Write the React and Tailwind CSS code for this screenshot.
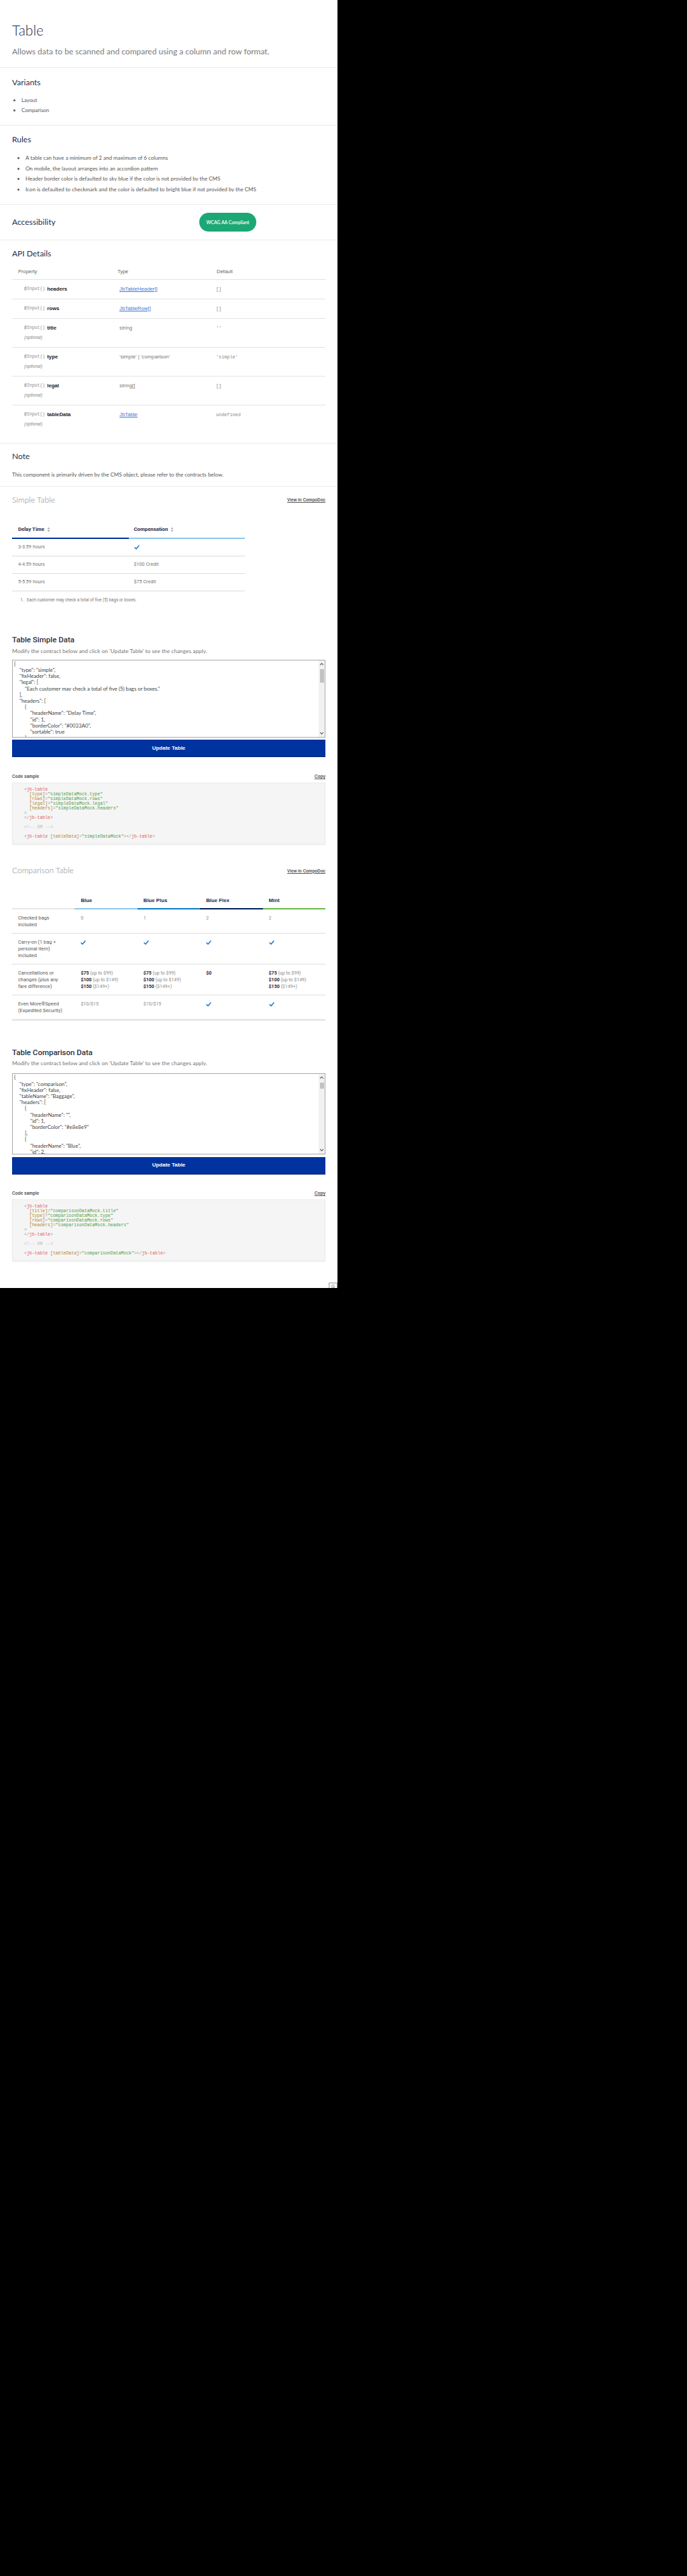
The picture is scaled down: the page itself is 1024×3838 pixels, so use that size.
import React from 'react'

const Check = () => (
  <svg width="8" height="7" viewBox="0 0 8 7" fill="none">
    <path d="M1 3.8 L3 5.8 L7 1" stroke="#1b75d0" strokeWidth="1.5" strokeLinecap="round" strokeLinejoin="round" />
  </svg>
)

const SortIcon = () => (
  <svg width="5" height="8" viewBox="0 0 5 8">
    <path d="M2.5 0.5 L4.5 3.2 H0.5Z M2.5 7.5 L4.5 4.8 H0.5Z" fill="#a8a8a8" />
  </svg>
)

const Chevron = ({ up }) => (
  <svg width="7" height="5" viewBox="0 0 7 5" fill="none">
    <path d={up ? 'M1 4 L3.5 1.3 L6 4' : 'M1 1 L3.5 3.7 L6 1'} stroke="#555" strokeWidth="1.1" />
  </svg>
)

const indent = ['pl-0', 'pl-[8px]', 'pl-[16px]', 'pl-[24px]']

const simpleJson = [
  [0, '{'],
  [1, '"type": "simple",'],
  [1, '"fixHeader": false,'],
  [1, '"legal": ['],
  [2, '"Each customer may check a total of five (5) bags or boxes."'],
  [1, '],'],
  [1, '"headers": ['],
  [2, '{'],
  [3, '"headerName": "Delay Time",'],
  [3, '"id": 1,'],
  [3, '"borderColor": "#0033A0",'],
  [3, '"sortable": true'],
  [2, '},'],
]

const comparisonJson = [
  [0, '{'],
  [1, '"type": "comparison",'],
  [1, '"fixHeader": false,'],
  [1, '"tableName": "Baggage",'],
  [1, '"headers": ['],
  [2, '{'],
  [3, '"headerName": "",'],
  [3, '"id": 1,'],
  [3, '"borderColor": "#e8e8e9"'],
  [2, '},'],
  [2, '{'],
  [3, '"headerName": "Blue",'],
  [3, '"id": 2,'],
]

const apiRows = [
  { name: 'headers', type: 'JbTableHeader[]', link: true, def: '[]' },
  { name: 'rows', type: 'JbTableRow[]', link: true, def: '[]' },
  { name: 'title', type: 'string', def: "''", optional: true },
  { name: 'type', type: "'simple' | 'comparison'", def: "'simple'", optional: true },
  { name: 'legal', type: 'string[]', def: '[]', optional: true },
  { name: 'tableData', type: 'JbTable', link: true, def: 'undefined', optional: true },
]

const Heading = ({ children }) => (
  <h2 className="text-[12px] leading-[16px] text-[#1f2d4f] font-normal">{children}</h2>
)

const Contract = ({ lines, height, thumbH }) => (
  <div>
    <div className={`flex border border-[#a9a9a9] bg-white ${height}`}>
      <div className="flex-1 overflow-hidden pl-[2px] pt-[1px] text-[7.8px] leading-[9.2px] text-[#444] font-['Lato',sans-serif]">
        {lines.map(([lvl, text], i) => (
          <div key={i} className={`whitespace-pre ${indent[lvl]}`}>{text}</div>
        ))}
      </div>
      <div className="w-[9px] bg-[#f1f1f1] flex flex-col items-center justify-between py-[3px]">
        <div className="flex flex-col items-center gap-[3px]">
          <Chevron up />
          <div className={`w-[6px] mt-[2px] bg-[#c1c1c1] ${thumbH}`} />
        </div>
        <Chevron />
      </div>
    </div>
    <button className="w-full h-[26px] bg-[#0033a0] border-b border-[#00226b] text-white text-[8px] font-bold font-['Liberation_Sans',Arial,sans-serif]">
      Update Table
    </button>
  </div>
)

const P = ({ c, children }) => <span className={c}>{children}</span>

const CodeSample = ({ mock, attrs }) => {
  const punct = 'text-[#9a9a9a]'
  const tag = 'text-[#e0605a]'
  const attr = 'text-[#b8862b]'
  const str = 'text-[#4f9f45]'
  return (
    <div>
      <div className="flex justify-between items-center h-[10px] font-['Liberation_Sans',Arial,sans-serif] text-[6.5px] font-bold text-[#555]">
        <span>Code sample</span>
        <span className="underline">Copy</span>
      </div>
      <div className="mt-[4px] bg-[#f5f5f5] border border-[#ebebeb] shadow-[0_1px_1px_rgba(0,0,0,0.06)] pl-[17px] pt-[6px] pb-[7px] font-['Liberation_Mono',monospace] text-[6.5px] leading-[7px] whitespace-pre">
        <div><P c={punct}>&lt;</P><P c={tag}>jb-table</P></div>
        {attrs.map((a) => (
          <div key={a}>
            {'  '}<P c={attr}>[{a}]</P><P c={punct}>=</P><P c={str}>"{mock}.{a}"</P>
          </div>
        ))}
        <div><P c={punct}>&gt;</P></div>
        <div><P c={punct}>&lt;/</P><P c={tag}>jb-table</P><P c={punct}>&gt;</P></div>
        <div>{' '}</div>
        <div className="text-[#b8b8b8] italic">&lt;!-- OR --&gt;</div>
        <div>{' '}</div>
        <div>
          <P c={punct}>&lt;</P><P c={tag}>jb-table</P> <P c={attr}>[tableData]</P><P c={punct}>=</P>
          <P c={str}>"{mock}"</P><P c={punct}>&gt;&lt;/</P><P c={tag}>jb-table</P><P c={punct}>&gt;</P>
        </div>
      </div>
    </div>
  )
}

const Price = ({ b, r }) => (
  <div className="whitespace-nowrap">
    <span className="font-bold text-[#1b2340]">{b}</span> <span className="text-[#8a8a8a]">{r}</span>
  </div>
)

const Prices = () => (
  <div>
    <Price b="$75" r="(up to $99)" />
    <Price b="$100" r="(up to $149)" />
    <Price b="$150" r="($149+)" />
  </div>
)

const compRows = [
  {
    label: ['Checked bags', 'included'],
    cells: ['0', '1', '2', '2'],
  },
  {
    label: ['Carry-on (1 bag +', 'personal item)', 'included'],
    cells: ['check', 'check', 'check', 'check'],
  },
  {
    label: ['Cancellations or', 'changes (plus any', 'fare difference)'],
    cells: ['prices', 'prices', '$0', 'prices'],
  },
  {
    label: ['Even More®Speed', '(Expedited Security)'],
    cells: ['$10/$15', '$10/$15', 'check', 'check'],
  },
]

const Cell = ({ v }) => {
  if (v === 'check') return <div className="pt-[2px] h-[10px]"><Check /></div>
  if (v === 'prices') return <Prices />
  if (v === '$0') return <span className="font-bold text-[#1b2340]">$0</span>
  return <span className="text-[#8a8a8a]">{v}</span>
}

export default function App() {
  return (
    <div className="min-h-[3838px] w-full bg-black">
      <div className="relative w-[503px] h-[1919px] bg-white overflow-hidden font-['Lato',sans-serif]">
        {/* header */}
        <section className="px-[18px] pt-[31px] pb-[15px] border-b border-[#ededed]">
          <h1 className="text-[21px] leading-[28px] font-light text-[#1b2a4e]">Table</h1>
          <p className="mt-[10px] text-[12px] leading-[16px] text-[#7b7b7b]">
            Allows data to be scanned and compared using a column and row format.
          </p>
        </section>

        {/* variants */}
        <section className="px-[18px] pt-[14px] pb-[14px] border-b border-[#ededed]">
          <Heading>Variants</Heading>
          <ul className="mt-[11px] pl-[14px] list-disc text-[7.8px] leading-[15px] text-[#5a5450]">
            <li>Layout</li>
            <li>Comparison</li>
          </ul>
        </section>

        {/* rules */}
        <section className="px-[18px] pt-[13px] pb-[13px] border-b border-[#ededed]">
          <Heading>Rules</Heading>
          <ul className="mt-[12px] pl-[20px] list-disc text-[8px] leading-[15.7px] text-[#5a5450]">
            <li>A table can have a minimum of 2 and maximum of 6 columns</li>
            <li>On mobile, the layout arranges into an accordion pattern</li>
            <li>Header border color is defaulted to sky blue if the color is not provided by the CMS</li>
            <li>Icon is defaulted to checkmark and the color is defaulted to bright blue if not provided by the CMS</li>
          </ul>
        </section>

        {/* accessibility */}
        <section className="px-[18px] pt-[12px] pb-[12px] border-b border-[#ededed] flex items-center">
          <div className="w-[279px]">
            <Heading>Accessibility</Heading>
          </div>
          <span className="w-[85px] h-[28px] rounded-full bg-[#1ca874] text-white text-[6.8px] font-semibold flex items-center justify-center">
            WCAG AA Compliant
          </span>
        </section>

        {/* api details */}
        <section className="px-[18px] pt-[12px] pb-[14px] border-b border-[#ededed]">
          <Heading>API Details</Heading>
          <div className="mt-[8px] font-['Liberation_Sans',Arial,sans-serif]">
            <div className="grid grid-cols-[148px_148px_1fr] h-[23px] items-center border-b border-[#e3e3e3] text-[7.5px] text-[#666]">
              <div className="pl-[9px]">Property</div>
              <div className="pl-[9px]">Type</div>
              <div className="pl-[9px]">Default</div>
            </div>
            {apiRows.map((r, i) => (
              <div
                key={r.name}
                className={`grid grid-cols-[148px_148px_1fr] py-[7px] ${i < apiRows.length - 1 ? 'border-b border-[#e3e3e3]' : ''}`}
              >
                <div className="pl-[18px]">
                  <div className="h-[14px] flex items-center gap-[3px]">
                    <span className="font-['Liberation_Mono',monospace] text-[6.5px] text-[#888]">@Input()</span>
                    <span className="text-[7.8px] font-bold text-[#222]">{r.name}</span>
                  </div>
                  {r.optional && (
                    <div className="h-[14px] flex items-center text-[6.5px] italic text-[#888]">(optional)</div>
                  )}
                </div>
                <div className="pl-[12px] h-[14px] flex items-center">
                  {r.link ? (
                    <span className="text-[7.8px] text-[#3f78d0] underline">{r.type}</span>
                  ) : (
                    <span className="text-[7.8px] text-[#777]">{r.type}</span>
                  )}
                </div>
                <div className="pl-[8px] h-[14px] flex items-center font-['Liberation_Mono',monospace] text-[6.8px] text-[#888]">
                  {r.def}
                </div>
              </div>
            ))}
          </div>
        </section>

        {/* note */}
        <section className="px-[18px] pt-[11px] pb-[11px] border-b border-[#ededed]">
          <Heading>Note</Heading>
          <p className="mt-[13px] text-[8px] leading-[12px] text-[#555]">
            This component is primarily driven by the CMS object, please refer to the contracts below.
          </p>
        </section>

        {/* simple table */}
        <section className="px-[18px] pt-[12px]">
          <div className="flex justify-between items-center h-[16px]">
            <span className="text-[12px] text-[#8a8a8a] font-light">Simple Table</span>
            <span className="font-['Liberation_Sans',Arial,sans-serif] text-[6.3px] font-bold underline text-[#555]">View in CompoDoc</span>
          </div>

          <div className="mt-[25px] w-[347px] font-['Roboto',sans-serif]">
            <div className="grid grid-cols-2 h-[25px] text-[7.8px] font-bold text-[#1b2a4e]">
              <div className="pl-[9px] flex items-center gap-[4px] border-b-2 border-[#0033a0]">Delay Time <SortIcon /></div>
              <div className="pl-[8px] flex items-center gap-[4px] border-b-2 border-[#8dc8ee]">Compensation <SortIcon /></div>
            </div>
            {[
              ['3-3:59 hours', 'check'],
              ['4-4:59 hours', '$100 Credit'],
              ['5-5:59 hours', '$75 Credit'],
            ].map(([a, b]) => (
              <div key={a} className="grid grid-cols-2 h-[26px] items-center border-b border-[#dcdcdc] text-[7.2px] text-[#777]">
                <div className="pl-[9px]">{a}</div>
                <div className="pl-[8px]">{b === 'check' ? <Check /> : b}</div>
              </div>
            ))}
            <ol className="mt-[8px] pl-[19px] list-decimal text-[6.3px] leading-[10px] text-[#777]">
              <li className="pl-[3px]">Each customer may check a total of five (5) bags or boxes.</li>
            </ol>
          </div>

          <div className="mt-[46px]">
            <h3 className="font-['Roboto',sans-serif] text-[11.5px] leading-[16px] font-medium text-[#2b2f3c]">Table Simple Data</h3>
            <p className="mt-[3px] text-[8.4px] leading-[12px] text-[#777]">
              Modify the contract below and click on 'Update Table' to see the changes apply.
            </p>
            <div className="mt-[7px]">
              <Contract lines={simpleJson} height="h-[116px]" thumbH="h-[20px]" />
            </div>
            <div className="mt-[24px]">
              <CodeSample mock="simpleDataMock" attrs={['type', 'rows', 'legal', 'headers']} />
            </div>
          </div>
        </section>

        {/* comparison table */}
        <section className="px-[18px] pt-[31px]">
          <div className="flex justify-between items-center h-[16px]">
            <span className="text-[12px] text-[#8a8a8a] font-light">Comparison Table</span>
            <span className="font-['Liberation_Sans',Arial,sans-serif] text-[6.3px] font-bold underline text-[#555]">View in CompoDoc</span>
          </div>

          <div className="mt-[26px] font-['Roboto',sans-serif]">
            <div className="grid grid-cols-5 h-[24px] text-[7.8px] font-bold text-[#1b2a4e] font-['Liberation_Sans',Arial,sans-serif]">
              <div className="border-b-2 border-[#e8e8e9]" />
              <div className="pl-[9px] flex items-center border-b-2 border-[#8dc8ee]">Blue</div>
              <div className="pl-[9px] flex items-center border-b-2 border-[#0a7ac6]">Blue Plus</div>
              <div className="pl-[9px] flex items-center border-b-2 border-[#00205b]">Blue Flex</div>
              <div className="pl-[9px] flex items-center border-b-2 border-[#6cbb48]">Mint</div>
            </div>
            {compRows.map((r, i) => (
              <div
                key={i}
                className={`grid grid-cols-5 py-[7.5px] text-[7.4px] leading-[10px] ${i === compRows.length - 1 ? 'border-b-[3px] border-[#e8e8e9]' : 'border-b border-[#dedede]'}`}
              >
                <div className="pl-[9px] text-[#5a5a5a]">
                  {r.label.map((l) => <div key={l} className="whitespace-nowrap">{l}</div>)}
                </div>
                {r.cells.map((c, j) => (
                  <div key={j} className="pl-[9px] text-[7px]">
                    <Cell v={c} />
                  </div>
                ))}
              </div>
            ))}
          </div>

          <div className="mt-[39px]">
            <h3 className="font-['Roboto',sans-serif] text-[11.5px] leading-[16px] font-medium text-[#2b2f3c]">Table Comparison Data</h3>
            <p className="mt-[2px] text-[8.4px] leading-[12px] text-[#777]">
              Modify the contract below and click on 'Update Table' to see the changes apply.
            </p>
            <div className="mt-[9px]">
              <Contract lines={comparisonJson} height="h-[121px]" thumbH="h-[9px]" />
            </div>
            <div className="mt-[23px]">
              <CodeSample mock="comparisonDataMock" attrs={['title', 'type', 'rows', 'headers']} />
            </div>
          </div>
        </section>

        {/* bottom corner badge */}
        <div className="absolute right-0 bottom-0 w-[13px] h-[8px] border border-b-0 border-[#9a9a9a] bg-white text-[7px] leading-[9px] text-[#666] text-center font-['Liberation_Sans',Arial,sans-serif]">
          G
        </div>
      </div>
    </div>
  )
}
